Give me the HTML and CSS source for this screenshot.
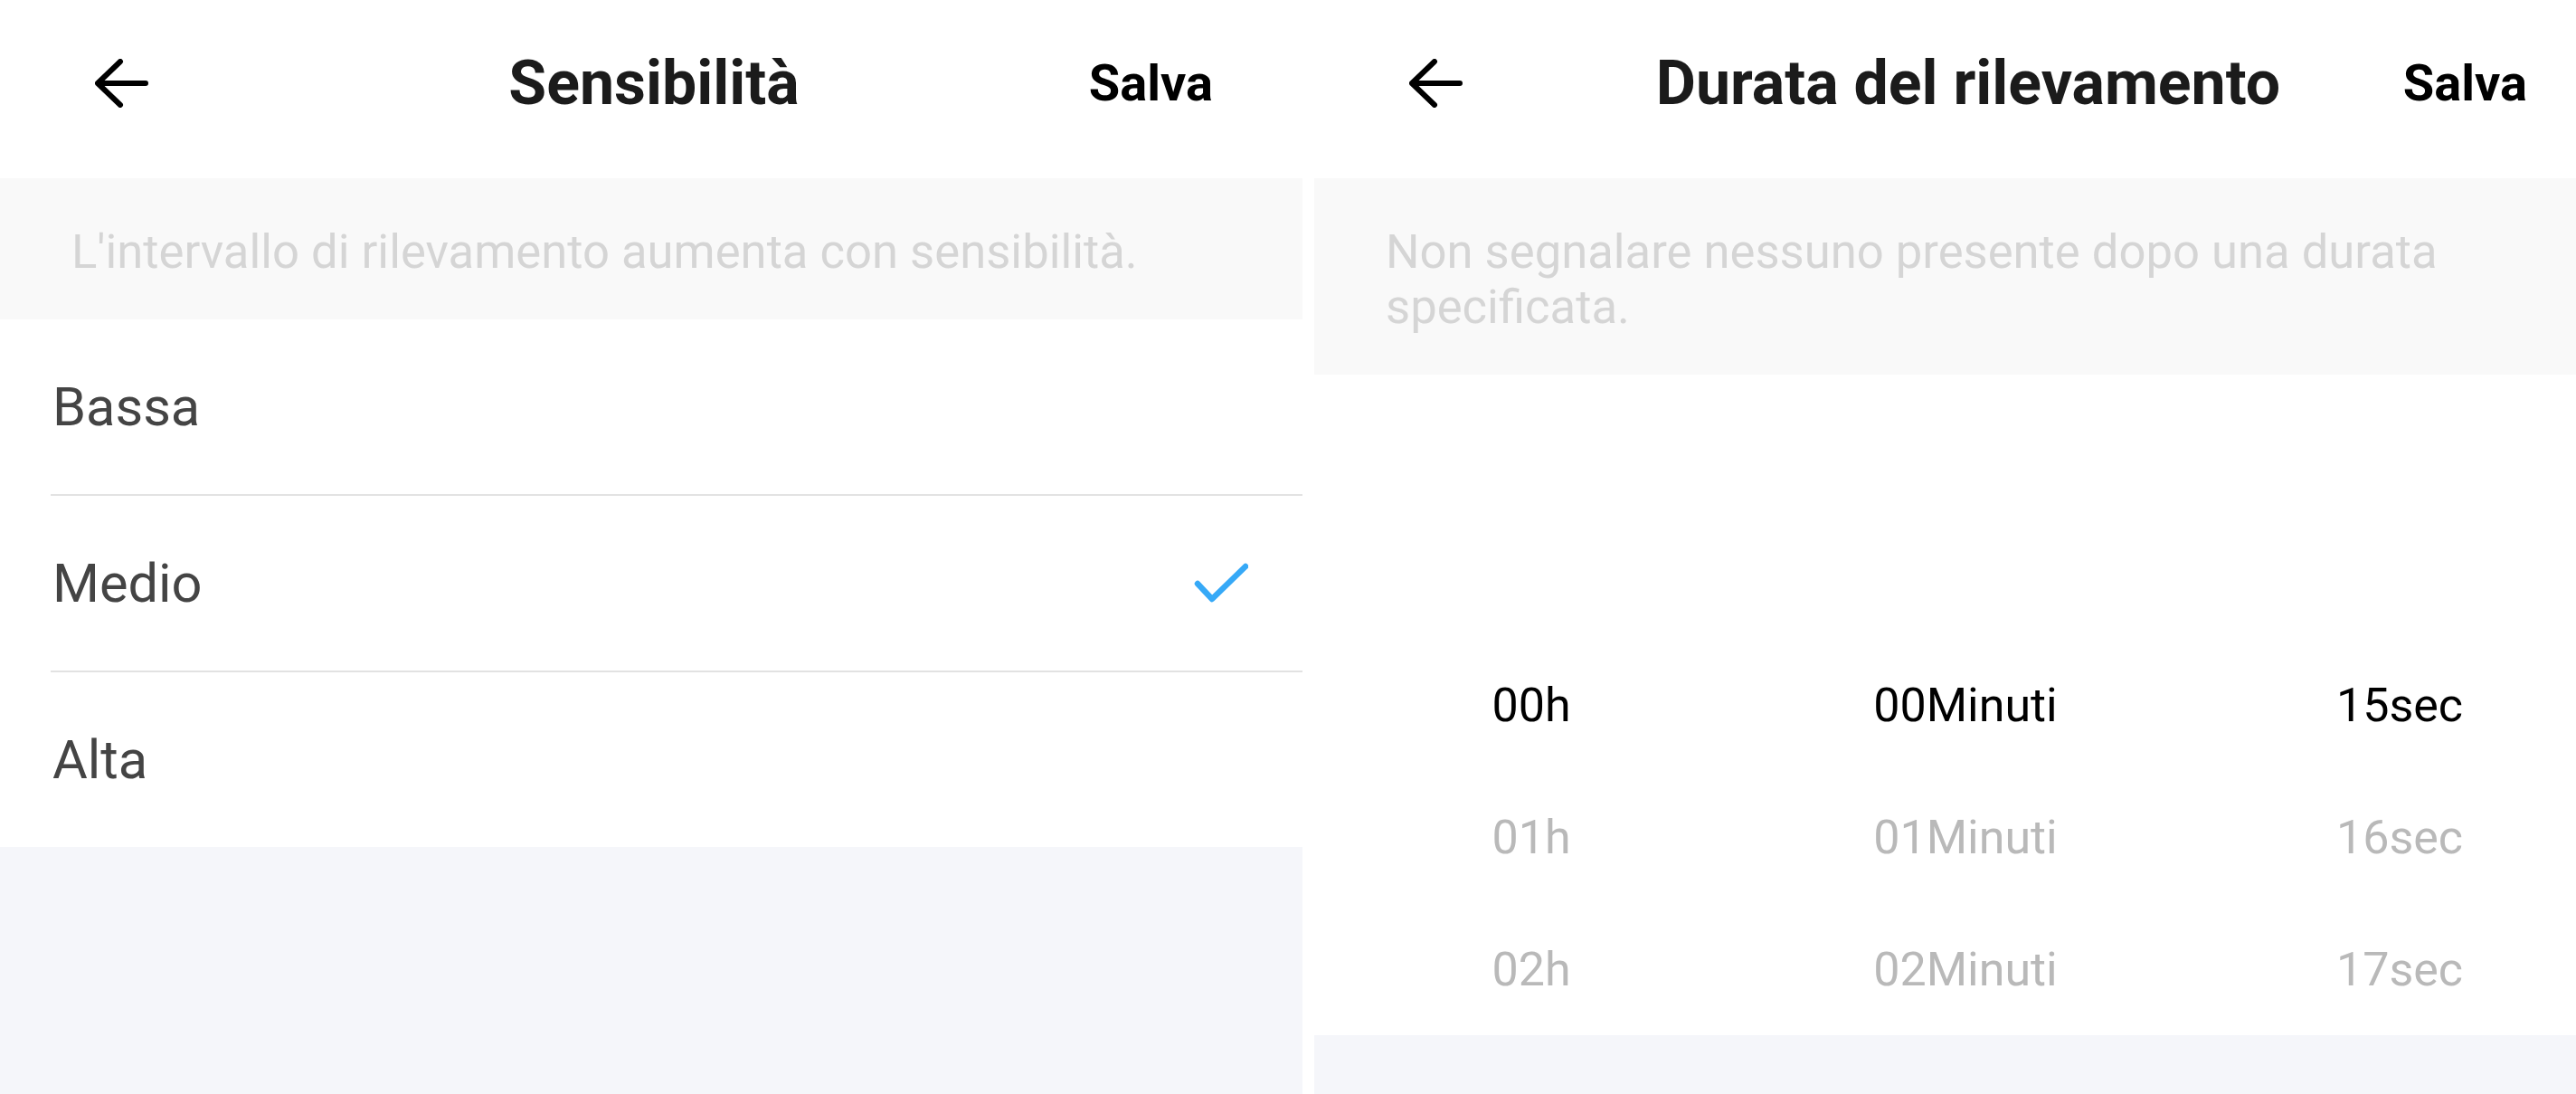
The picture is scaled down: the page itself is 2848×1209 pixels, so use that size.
FILE: index.html
```html
<!DOCTYPE html>
<html lang="it">
<head>
  <meta charset="UTF-8">
  <meta name="viewport" content="width=device-width, initial-scale=1.0">
  <title>Sensibilità / Durata del rilevamento</title>
  <link rel="stylesheet" href="styles.css">
</head>
<body>
  <!-- sensitivity screen -->
  <div class="panel">
    <div class="topbar">
      <svg class="back" width="59" height="54" viewBox="0 0 59 54">
        <path d="M28 3 L3 27 L28 51 M3 27 H56" />
      </svg>
      <div class="title">Sensibilità</div>
      <div class="save">Salva</div>
    </div>
    <div class="hint">L'intervallo di rilevamento aumenta con sensibilità.</div>
    <div class="options">
      <div class="option">Bassa</div>
      <div class="option">Medio
        <svg class="check" width="60" height="46" viewBox="0 0 60 46">
          <path d="M4 23 L20 40 L57 4" />
        </svg>
      </div>
      <div class="option">Alta</div>
    </div>
    <div class="filler"></div>
  </div>

  <!-- detection duration screen -->
  <div class="panel">
    <div class="topbar">
      <svg class="back" width="59" height="54" viewBox="0 0 59 54">
        <path d="M28 3 L3 27 L28 51 M3 27 H56" />
      </svg>
      <div class="title">Durata del rilevamento</div>
      <div class="save">Salva</div>
    </div>
    <div class="hint">Non segnalare nessuno presente dopo una durata specificata.</div>
    <div class="picker">
      <div class="picker-row"></div>
      <div class="picker-row"></div>
      <div class="picker-row selected">
        <span>00h</span><span>00Minuti</span><span>15sec</span>
      </div>
      <div class="picker-row">
        <span>01h</span><span>01Minuti</span><span>16sec</span>
      </div>
      <div class="picker-row">
        <span>02h</span><span>02Minuti</span><span>17sec</span>
      </div>
    </div>
    <div class="filler"></div>
  </div>
</body>
</html>
```

FILE: styles.css
```css
html, body {
  margin: 0;
  height: 100%;
}

body {
  width: 2848px;
  height: 1209px;
  overflow: hidden;
  display: flex;
  gap: 13px;
  background-color: #fff;
  font-family: Roboto, 'Liberation Sans', sans-serif;
}

.panel {
  width: 1440px;
  flex-shrink: 0;
  display: flex;
  flex-direction: column;
  background-color: #fff;
}

.topbar {
  height: 184px;
  padding: 0 99px 13px 105px;
  display: grid;
  grid-template-columns: 1fr auto 1fr;
  align-items: center;
}

.back path {
  fill: none;
  stroke: #000;
  stroke-width: 6;
  stroke-linecap: round;
  stroke-linejoin: round;
}

.title {
  font-size: 68px;
  font-weight: 700;
  color: #1b1b1b;
  text-align: center;
}

.save {
  justify-self: end;
  font-size: 56px;
  font-weight: 700;
  color: #000;
}

.hint {
  background-color: #f9f9f9;
  color: #d5d5d5;
  font-size: 52.6px;
  line-height: 61px;
  padding: 51px 80px 44px 79px;
}

.option {
  height: 193px;
  margin-left: 56px;
  padding: 0 60px 0 2px;
  display: flex;
  align-items: center;
  justify-content: space-between;
  font-size: 59.5px;
  color: #444;
}

.option + .option {
  border-top: 2px solid #e2e2e2;
}

.check path {
  fill: none;
  stroke: #36a9f7;
  stroke-width: 6.5;
  stroke-linecap: round;
  stroke-linejoin: round;
}

.picker {
  background-color: #fff;
}

.picker-row {
  height: 146px;
  display: grid;
  grid-template-columns: repeat(3, 1fr);
  align-items: center;
  text-align: center;
  font-size: 52px;
  color: #b9b9b9;
}

.picker-row.selected {
  color: #000;
}

.filler {
  flex: 1;
  background-color: #f5f6fa;
}
```
